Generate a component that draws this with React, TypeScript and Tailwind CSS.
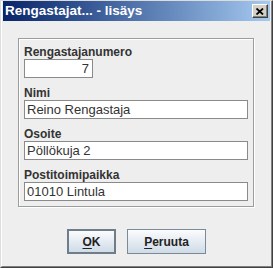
export default function App() {
  return (
    <div className="w-[273px] h-[268px] bg-[#eeeeee] font-['Liberation_Sans',Arial,sans-serif] border-t border-l border-[#dcdcdc] border-r border-b border-r-[#404040] border-b-[#404040] flex">
      <div className="flex-1 flex flex-col border-l border-l-white border-r border-r-[#808080] border-b border-b-[#808080] px-px pb-[2px]">
        <TitleBar title="Rengastajat... - lisäys" />

        <div className="flex-1 flex flex-col">
          <fieldset className="mt-[17px] ml-[15px] mr-[16px] border border-[#9c9c9c] shadow-[1px_1px_0_#ffffff,inset_1px_1px_0_#ffffff] pt-[6px] px-[5px] pb-[5px] flex flex-col">
            <Field label="Rengastajanumero" value="7" narrow />
            <Field label="Nimi" value="Reino Rengastaja" />
            <Field label="Osoite" value="Pöllökuja 2" />
            <Field label="Postitoimipaikka" value="01010 Lintula" />
          </fieldset>

          <div className="mt-[22px] flex justify-center gap-[11px]">
            <DialogButton mnemonic="O" rest="K" width="w-[49px]" isDefault />
            <DialogButton mnemonic="P" rest="eruuta" width="w-[79px]" />
          </div>
        </div>
      </div>
    </div>
  );
}

function TitleBar({ title }: { title: string }) {
  return (
    <div className="h-[20px] bg-gradient-to-r from-[#0a246a] to-[#a6caf0] flex items-center justify-between pl-[2px] pr-[2px]">
      <span className="text-white font-bold text-[13.5px] leading-none">{title}</span>
      <div className="w-[16px] h-[14px] bg-[#d4d0c8] border border-t-white border-l-white border-r-[#404040] border-b-[#404040] shadow-[inset_-1px_-1px_0_#808080] flex items-center justify-center">
        <svg width="8" height="7" viewBox="0 0 8 7">
          <path d="M0.5 0.5 L7 6.5 M7 0.5 L0.5 6.5" stroke="#000" strokeWidth="1.8" />
        </svg>
      </div>
    </div>
  );
}

function Field({
  label,
  value,
  narrow,
}: {
  label: string;
  value: string;
  narrow?: boolean;
}) {
  return (
    <div className="flex flex-col mb-[8px] last:mb-0">
      <div className="h-[14px] text-[12px] leading-[14px] font-bold text-[#333333]">
        {label}
      </div>
      <div
        className={
          narrow
            ? "w-[69px] h-[19px] bg-white border border-[#8a8a8a] text-[13px] leading-[17px] text-[#333333] text-right pr-[3px]"
            : "w-full h-[19px] bg-white border border-[#8a8a8a] text-[13px] leading-[17px] text-[#333333] pl-[2px]"
        }
      >
        {value}
      </div>
    </div>
  );
}

function DialogButton({
  mnemonic,
  rest,
  width,
  isDefault,
}: {
  mnemonic: string;
  rest: string;
  width: string;
  isDefault?: boolean;
}) {
  return (
    <button
      type="button"
      className={
        isDefault
          ? `${width} h-[25px] border-2 border-[#6f7d8a] bg-gradient-to-b from-[#fbfcfd] to-[#cfdbe7] text-[12px] font-bold text-[#222222] flex items-center justify-center`
          : `${width} h-[25px] border border-[#7a8a99] bg-gradient-to-b from-[#fbfcfd] to-[#cfdbe7] text-[12px] font-bold text-[#222222] flex items-center justify-center`
      }
    >
      <span className="underline underline-offset-2">{mnemonic}</span>
      {rest}
    </button>
  );
}
